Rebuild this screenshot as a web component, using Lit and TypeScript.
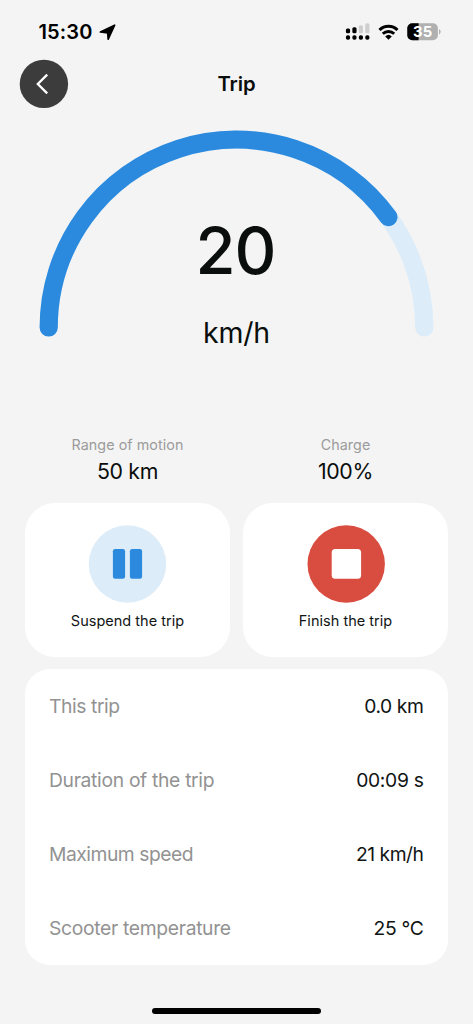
import { LitElement, html, css, svg } from "lit";
import { customElement, property } from "lit/decorators.js";

@customElement("status-bar")
class StatusBar extends LitElement {
  static styles = css`
    :host { display: flex; align-items: center; height: 60px; box-sizing: border-box; padding: 4px 32px 0 38.5px; }
    .time { font-size: 20px; font-weight: 600; letter-spacing: 0.15px; line-height: 24px; color: #000; }
    .arrow { margin-left: 6px; width: 17px; height: 17px; }
    .spacer { flex: 1; }
    .signal { width: 25px; height: 18px; margin-right: 8px; }
    .wifi { width: 21px; height: 17px; margin-right: 8px; }
    .battery { width: 34px; height: 18px; }
    svg { display: block; flex: none; }
    .level { font: 700 14.8px Inter, "Liberation Sans", sans-serif; letter-spacing: 0.2px; }
  `;

  render() {
    return html`
      <span class="time">15:30</span>
      <svg class="arrow" viewBox="0 0 17 17">
        <path d="M15.6 1.2 L9.2 15.2 L8.7 8.9 L1.4 8 Z" fill="#000" stroke="#000" stroke-width="1.7" stroke-linejoin="round" />
      </svg>
      <span class="spacer"></span>
      <svg class="signal" viewBox="0 0 25 18">
        ${[0, 1, 2, 3].map(
          (i) => svg`
            <rect x=${i * 6.45 + 0.9} y=${[5.6, 4.3, 2.3, 0.3][i]} width="4.2" height=${[4.6, 5.9, 7.9, 9.9][i]} rx="1.5" fill=${i < 2 ? "#000" : "#cfcfcf"} />
            <rect x=${i * 6.45 + 0.9} y="12.3" width="4.2" height="4.4" rx="1.8" fill="#000" />`
        )}
      </svg>
      <svg class="wifi" viewBox="0 0 21 17">
        <g fill="none" stroke="#000" stroke-width="2.9">
          <path d="M1.5 6 A12.6 12.6 0 0 1 19.5 6" />
          <path d="M4.8 9.8 A8.2 8.2 0 0 1 16.2 9.8" />
        </g>
        <path d="M10.5 15.8 L7.2 12.4 A4.8 4.8 0 0 1 13.8 12.4 Z" fill="#000" />
      </svg>
      <svg class="battery" viewBox="0 0 34 18">
        <defs><clipPath id="cell"><rect x="0.3" y="0.2" width="30.6" height="17" rx="5" /></clipPath></defs>
        <g clip-path="url(#cell)">
          <rect width="31" height="18" fill="#b0b0b0" />
          <rect width="11.6" height="18" fill="#000" />
        </g>
        <path d="M32 6 Q33.7 7 33.7 8.7 Q33.7 10.4 32 11.4 Z" fill="#b0b0b0" />
        <text class="level" x="15.8" y="14" text-anchor="middle" fill="#fff">35</text>
      </svg>
    `;
  }
}

@customElement("speed-gauge")
class SpeedGauge extends LitElement {
  @property({ type: Number }) speed = 20;
  @property({ type: Number }) ratio = 0.8;

  static styles = css`
    :host { display: grid; width: 395px; height: 207px; }
    .dial, .readout { grid-area: 1 / 1; }
    .dial { display: block; width: 395px; height: 207px; }
    .readout { display: flex; flex-direction: column; align-items: center; padding-top: 80.5px; color: #0a0f0d; }
    .value { font-size: 65px; line-height: 80px; font-weight: 500; letter-spacing: -1px; padding-right: 2px; }
    .unit { font-size: 28.5px; line-height: 40px; margin-top: 22px; letter-spacing: -0.2px; }
  `;

  render() {
    const a = Math.PI * (1 - this.ratio);
    const x = 197.5 + 187.8 * Math.cos(a);
    const y = 197.5 - 187.8 * Math.sin(a);
    return html`
      <svg class="dial" viewBox="0 0 395 207" fill="none" stroke-width="18.2" stroke-linecap="round">
        <path d="M9.7 197.5 A187.8 187.8 0 0 1 385.3 197.5" stroke="#dcecf9" />
        <path d="M9.7 197.5 A187.8 187.8 0 0 1 ${x} ${y}" stroke="#2b8ade" />
      </svg>
      <div class="readout">
        <span class="value">${this.speed}</span>
        <span class="unit">km/h</span>
      </div>
    `;
  }
}

@customElement("app-root")
class AppRoot extends LitElement {
  static styles = css`
    :host {
      display: flex; flex-direction: column; width: 473px; height: 1024px; overflow: hidden;
      background: #f4f4f4; color: #101413; font-family: Inter, "Liberation Sans", sans-serif;
    }
    svg { display: block; overflow: visible; }
    .header { display: grid; grid-template-columns: 48px 1fr 48px; align-items: center; height: 48px; padding: 0 20px; }
    .back { width: 48px; height: 48px; padding: 0; border: 0; background: none; }
    .title { text-align: center; font-size: 20.3px; line-height: 26px; font-weight: 600; letter-spacing: -0.1px; color: #0a0d0c; }
    .gauge { margin: 22px 0 0 39px; }
    .stats { display: grid; grid-template-columns: 1fr 1fr; gap: 13px; padding: 0 25px; margin-top: 98px; text-align: center; }
    .stat-label { font-size: 14.3px; line-height: 20px; letter-spacing: 0.07px; color: #9b9b9b; }
    .stat-value { font-size: 21.3px; line-height: 28px; margin-top: 1.5px; letter-spacing: -0.3px; color: #0a0d0c; }
    .actions { display: grid; grid-template-columns: 1fr 1fr; gap: 13px; padding: 0 25px; margin-top: 18.5px; }
    .action {
      display: flex; flex-direction: column; align-items: center; height: 154px; box-sizing: border-box;
      padding: 22px 0 0; border: 0; border-radius: 30px; background: #fff; color: inherit; font: inherit;
    }
    .action-label { font-size: 14.5px; line-height: 20px; margin-top: 8px; letter-spacing: 0.02px; }
    .details { margin: 12px 25px 0; border-radius: 25px; background: #fff; overflow: hidden; }
    .row { display: flex; justify-content: space-between; align-items: center; height: 73.9px; padding: 0 24.5px 0 24px; font-size: 19.3px; line-height: 26px; letter-spacing: -0.32px; }
    .row-label { color: #929292; }
    .row:nth-child(1) { letter-spacing: -0.42px; }
    .row:nth-child(3) { letter-spacing: -0.48px; }
    .home { width: 169px; height: 6px; border-radius: 3px; background: #000; margin: auto auto 10px; }
  `;

  render() {
    const rows = [
      ["This trip", "0.0 km"],
      ["Duration of the trip", "00:09 s"],
      ["Maximum speed", "21 km/h"],
      ["Scooter temperature", "25 °C"],
    ];
    return html`
      <status-bar></status-bar>
      <header class="header">
        <button class="back" aria-label="Back">
          <svg width="48" height="48" viewBox="0 0 48 48">
            <circle cx="23.9" cy="23.9" r="24.2" fill="#3c3c3c" />
            <path d="M27.2 14.6 L17.8 24 L27.2 33.4" fill="none" stroke="#fff" stroke-width="2.3" />
          </svg>
        </button>
        <span class="title">Trip</span>
      </header>
      <speed-gauge class="gauge"></speed-gauge>
      <section class="stats">
        <div>
          <div class="stat-label">Range of motion</div>
          <div class="stat-value">50 km</div>
        </div>
        <div>
          <div class="stat-label">Charge</div>
          <div class="stat-value">100%</div>
        </div>
      </section>
      <section class="actions">
        <button class="action">
          <svg width="77" height="78" viewBox="0 0 77 78">
            <circle cx="38.5" cy="39" r="38.7" fill="#dcecf9" />
            <rect x="23.9" y="24.1" width="12.2" height="29.6" rx="2.2" fill="#2b8ade" />
            <rect x="40.9" y="24.1" width="12.2" height="29.6" rx="2.2" fill="#2b8ade" />
          </svg>
          <span class="action-label">Suspend the trip</span>
        </button>
        <button class="action">
          <svg width="77" height="78" viewBox="0 0 77 78">
            <circle cx="39.2" cy="39" r="38.7" fill="#d94c40" />
            <rect x="24.7" y="24.1" width="29.4" height="29.6" rx="3.5" fill="#fff" />
          </svg>
          <span class="action-label">Finish the trip</span>
        </button>
      </section>
      <section class="details">
        ${rows.map(
          ([label, value]) => html`
            <div class="row"><span class="row-label">${label}</span><span>${value}</span></div>`
        )}
      </section>
      <div class="home"></div>
    `;
  }
}
